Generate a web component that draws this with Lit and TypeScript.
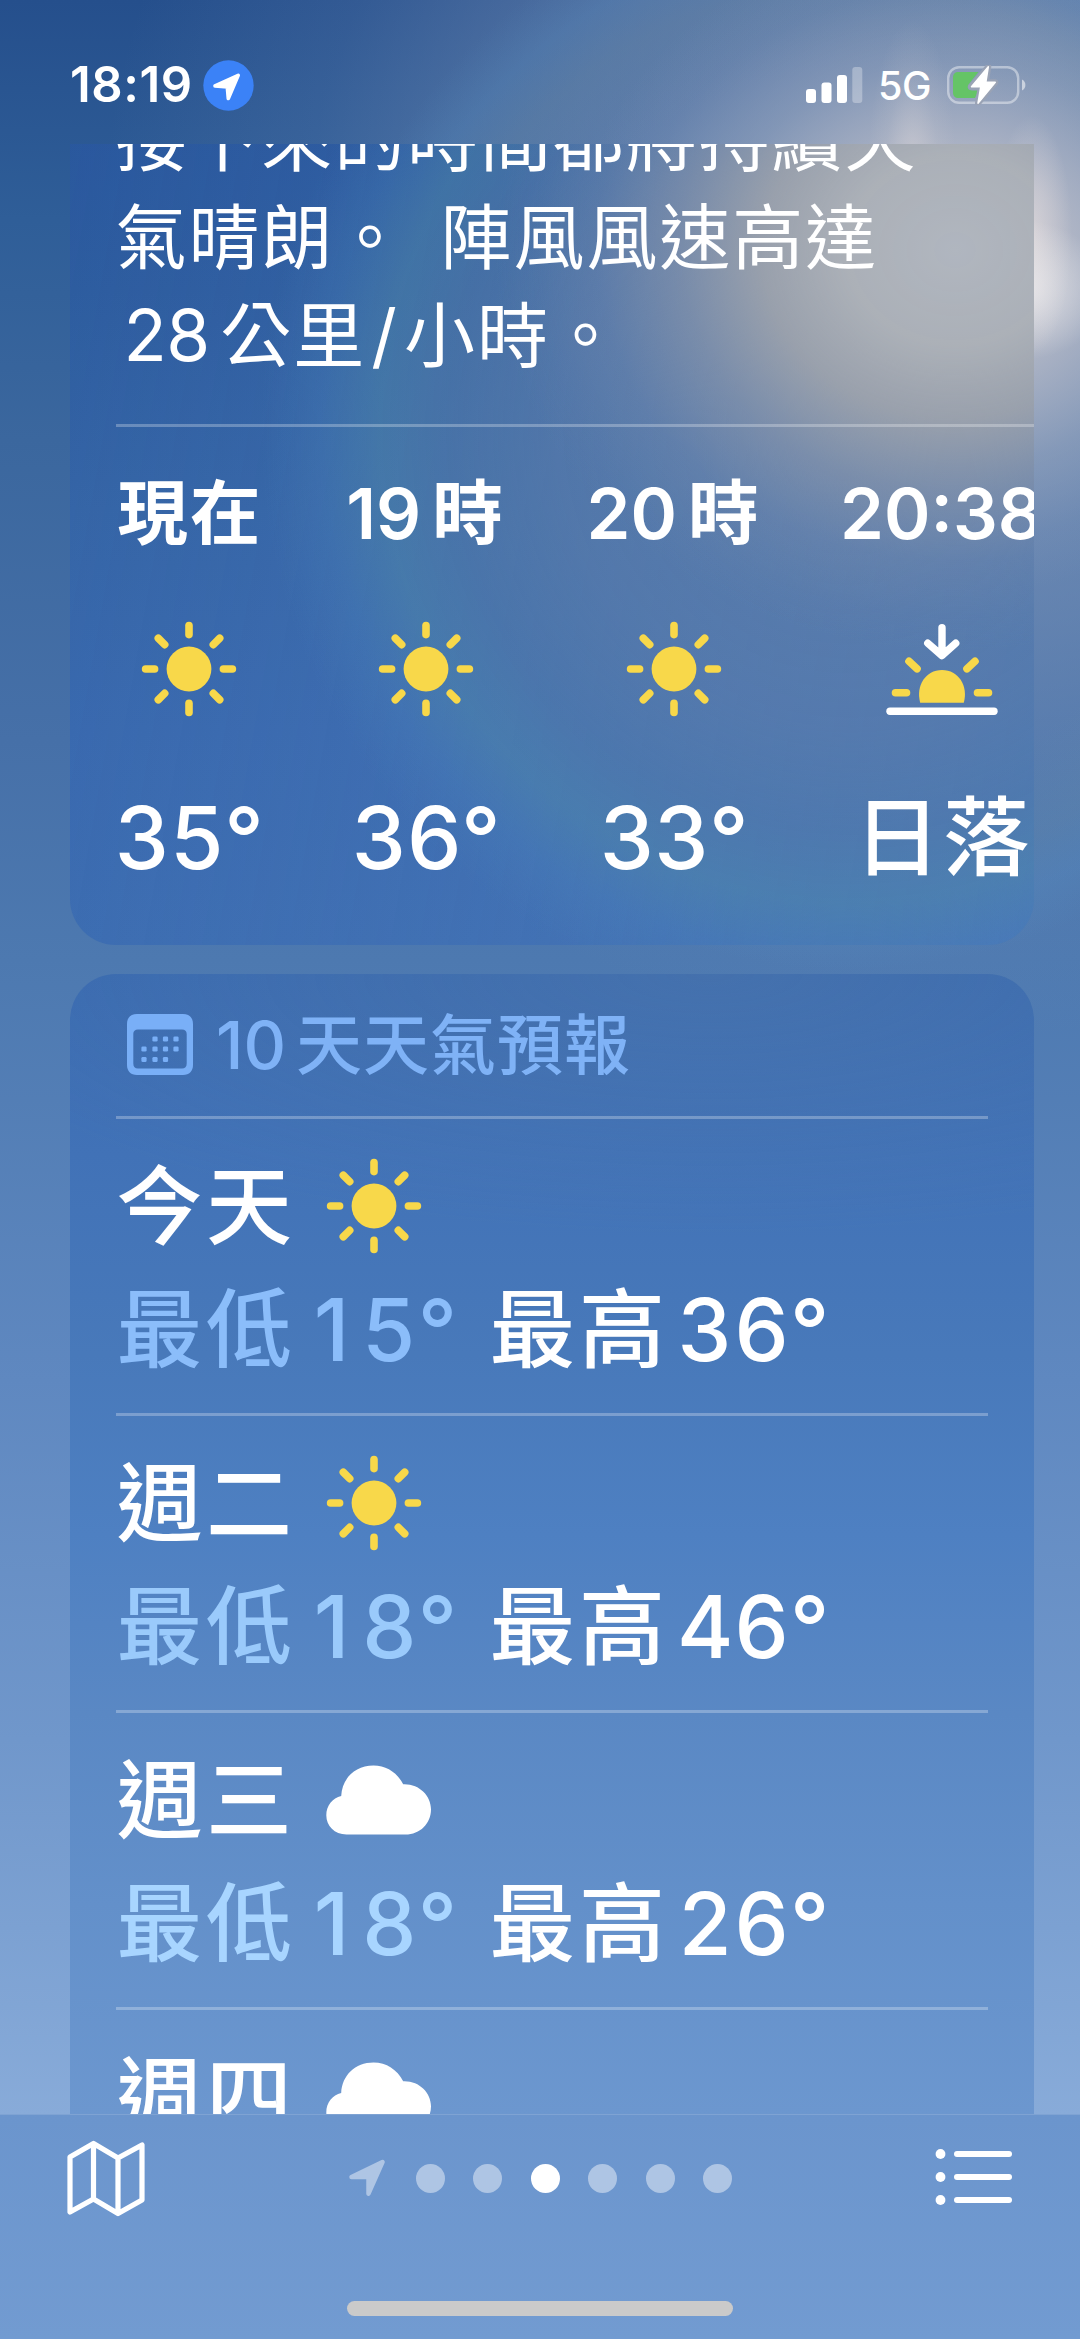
import { LitElement, html, svg, css, nothing } from "lit";
import { customElement, property } from "lit/decorators.js";

type Sky = "sun" | "cloud" | "sunset";

interface Hour {
  digits: string;
  word: string;
  sky: Sky;
  value: string;
  kind: string;
}

interface Day {
  name: string;
  sky: Sky;
  low: string;
  high: string;
  tone: string;
}

const HOURS: Hour[] = [
  { digits: "", word: "現在", sky: "sun", value: "35°", kind: "now" },
  { digits: "19", word: "時", sky: "sun", value: "36°", kind: "h19" },
  { digits: "20", word: "時", sky: "sun", value: "33°", kind: "h20" },
  { digits: "20:38", word: "", sky: "sunset", value: "日落", kind: "set" },
];

const DAYS: Day[] = [
  { name: "今天", sky: "sun", low: "15°", high: "36°", tone: "t1" },
  { name: "週二", sky: "sun", low: "18°", high: "46°", tone: "t2" },
  { name: "週三", sky: "cloud", low: "18°", high: "26°", tone: "t3" },
];

@customElement("weather-icon")
export class WeatherIcon extends LitElement {
  @property() sky: Sky = "sun";

  static styles = css`
    :host {
      display: block;
      line-height: 0;
    }
    svg {
      display: block;
      overflow: visible;
    }
    .gold {
      fill: #f8d84a;
    }
    .ray {
      stroke: #f8d84a;
      stroke-width: 7.6;
      stroke-linecap: round;
    }
    .white {
      fill: #fff;
    }
    .line {
      stroke: #fff;
      stroke-width: 7.4;
      stroke-linecap: round;
      stroke-linejoin: round;
      fill: none;
    }
  `;

  render() {
    if (this.sky === "cloud") {
      return html`<svg width="106" height="96" viewBox="0 0 106 96">
        <path
          class="white"
          d="M20.5 82.5 C8.5 82.5 0.3 74 0.3 63.3 C0.3 53.5 6.5 46 15.2 44 C16 26.500 29 13.500 47.500 13.500 C60.500 13.500 71 20.500 77.200 32.200 C93 31.500 105 43.500 105 57.200 C105 71.500 94 82.500 79.500 82.500 Z"
        />
      </svg>`;
    }
    if (this.sky === "sunset") {
      return html`<svg width="112" height="96" viewBox="0 0 112 96">
        <path class="line" d="M56 6.700 V33.500 M41.800 22.200 L56 34.600 L69.700 22.200" />
        <path class="gold" d="M34.200 81.700 C29.500 65 39.500 49 56 49 C72.500 49 82.500 65 77.800 81.700 Z" />
        <path class="ray" d="M9.500 71.700 H20.500 M91.500 71.700 H102.500 M23 40.300 L31 47.800 M89 40.300 L81 47.800" />
        <path class="line" d="M4 90.300 H108" />
      </svg>`;
    }
    return html`<svg width="96" height="96" viewBox="0 0 96 96">
      <circle class="gold" cx="48" cy="48" r="22.4" />
      ${[0, 45, 90, 135, 180, 225, 270, 315].map(
        (angle) =>
          svg`<line class="ray" x1="48" y1="4.600" x2="48" y2="13.600" transform="rotate(${angle} 48 48)" />`,
      )}
    </svg>`;
  }
}

@customElement("app-root")
export class AppRoot extends LitElement {
  static styles = css`
    :host {
      display: block;
      color: #fff;
      font-family: Inter, "Noto Sans CJK TC", sans-serif;
    }
    .screen {
      display: flex;
      flex-direction: column;
      width: 1080px;
      height: 2339px;
      overflow: hidden;
      background:
        radial-gradient(44px 150px at 912px 170px, rgba(238, 228, 224, 0.42), rgba(220, 215, 215, 0.12) 60%, transparent),
        radial-gradient(90px 70px at 1020px 290px, rgba(255, 252, 250, 0.6), transparent),
        radial-gradient(40px 120px at 1032px 235px, rgba(245, 234, 230, 0.5), transparent),
        radial-gradient(380px 330px at 950px 265px, rgba(206, 202, 207, 0.9) 0, rgba(194, 194, 203, 0.76) 32%, rgba(165, 175, 194, 0.42) 62%, rgba(150, 165, 192, 0.12) 84%, rgba(150, 165, 192, 0) 100%),
        radial-gradient(540px 540px at 850px 430px, transparent 66%, rgba(110, 152, 165, 0.14) 82%, rgba(90, 155, 205, 0.16) 91%, transparent),
        radial-gradient(860px 800px at 960px 240px, rgba(155, 168, 195, 0.74), rgba(138, 157, 190, 0.46) 48%, rgba(125, 150, 190, 0.16) 76%, transparent),
        linear-gradient(180deg, #254f8c 0, #2f5e98 220px, #3b679e 440px, #4670a8 740px, #4d79b0 960px, #5f88c0 1380px, #7097cb 1740px, #88abd9 2115px);
    }
    .status {
      flex: none;
      box-sizing: border-box;
      height: 144px;
      padding: 25px 54px 0 70px;
      display: flex;
      justify-content: space-between;
      line-height: 1.2;
    }
    .group {
      height: 120px;
      display: flex;
      align-items: center;
    }
    .clock {
      font-size: 49px;
      font-weight: 600;
      letter-spacing: 0.600px;
      width: 132.500px;
    }
    .locate {
      width: 51px;
      height: 51px;
      display: block;
    }
    .net {
      font-size: 39.500px;
      font-weight: 500;
      letter-spacing: -0.300px;
      margin: 4px 16px 0 15px;
      width: 53px;
    }
    main {
      flex: none;
      height: 1970px;
      overflow: hidden;
      display: flex;
      flex-direction: column;
      gap: 29px;
      padding: 0 46px 0 69.500px;
    }
    .card {
      flex: none;
      box-sizing: border-box;
      overflow: hidden;
      border-radius: 46px;
      padding-left: 46px;
    }
    .hourly {
      margin-top: -54.500px;
      height: 855px;
      background:
        radial-gradient(460px 400px at 885px 160px, #b0b6bf 0, rgba(174, 178, 184, 0.97) 24%, rgba(166, 168, 173, 0.84) 42%, rgba(150, 157, 172, 0.56) 60%, rgba(130, 146, 175, 0.26) 78%, rgba(120, 142, 175, 0.08) 92%, transparent),
        radial-gradient(590px 590px at 781px 340px, rgba(108, 134, 170, 0.62) 0, rgba(100, 130, 170, 0.54) 50%, rgba(90, 128, 168, 0.46) 68%, rgba(85, 142, 170, 0.42) 80%, rgba(80, 138, 188, 0.22) 90%, transparent),
        linear-gradient(100deg, transparent, rgba(100, 140, 195, 0.3)),
        linear-gradient(180deg, #28569d 0, #2d5c9f 200px, #3464a6 420px, #3868ae 640px, #3b6cb1 855px);
    }
    .daily {
      padding-right: 46px;
      height: 1400px;
      background:
        radial-gradient(800px 260px at 640px 0, rgba(90, 125, 165, 0.32), transparent),
        linear-gradient(180deg, #3a6bb1 0, #4172b7 180px, #4879ba 380px, #4e80c2 560px, #5a88c4 740px, #6390ca 930px, #6c97cf 1141px);
    }
    .summary {
      height: 334px;
      box-sizing: border-box;
      font-size: 71px;
      line-height: 98px;
      font-weight: 400;
      letter-spacing: 1.900px;
      white-space: nowrap;
    }
    .line {
      height: 98px;
    }
    .gap {
      display: inline-block;
      width: 33.500px;
    }
    .wind {
      margin-left: 8px;
      margin-right: 10.500px;
      letter-spacing: -0.5px;
    }
    .slash {
      display: inline-block;
      width: 38px;
      text-align: center;
    }
    .rule {
      height: 3px;
      background: rgba(255, 255, 255, 0.27);
    }
    .hours {
      display: grid;
      grid-template-columns: 146px 160px 168px 200px;
      column-gap: 84px;
      padding-top: 45px;
    }
    .hour {
      display: flex;
      flex-direction: column;
      align-items: center;
      white-space: nowrap;
    }
    .label {
      height: 84px;
      line-height: 84px;
      font-size: 70.500px;
      font-weight: 600;
      margin-bottom: 65px;
      display: flex;
      gap: 11px;
    }
    .word {
      letter-spacing: 2px;
    }
    .now .word {
      margin-left: 3px;
    }
    .value {
      margin-top: 71px;
      height: 100px;
      line-height: 100px;
      font-size: 86.500px;
      font-weight: 500;
      letter-spacing: -1.300px;
      font-feature-settings: "tnum";
    }
    .set .value {
      letter-spacing: 2.500px;
      margin-left: 3px;
    }
    .head {
      height: 142.500px;
      display: flex;
      align-items: center;
      color: #7fb2f6;
      font-size: 66px;
      line-height: 80px;
      font-weight: 500;
      padding-left: 11.500px;
      white-space: nowrap;
    }
    .head .num {
      margin-left: 23px;
      width: 72px;
    }
    .head .title {
      margin-left: 8px;
      letter-spacing: 1px;
    }
    .day {
      height: 294px;
      padding-top: 26.500px;
      box-sizing: border-box;
      font-size: 86px;
      line-height: 123px;
      font-weight: 500;
      white-space: nowrap;
      font-feature-settings: "tnum";
    }
    .top,
    .temps {
      height: 123px;
      display: flex;
      align-items: center;
      padding-left: 1px;
    }
    .cjk {
      width: 178px;
      letter-spacing: 3.500px;
    }
    .top weather-icon {
      margin-left: 31px;
      margin-top: -2px;
    }
    .deg {
      letter-spacing: 0.500px;
      margin-left: 10px;
      width: 185px;
    }
    .lead {
      display: inline-block;
      box-sizing: border-box;
      width: 57px;
      padding-right: 12px;
      text-align: right;
      letter-spacing: 0;
      font-feature-settings: "tnum" 0;
    }
    .low,
    .high {
      display: flex;
    }
    .t1 .low {
      color: #8bbdfa;
    }
    .t2 .low {
      color: #9acafb;
    }
    .t3 .low {
      color: #a8d5ff;
    }
    footer {
      flex: none;
      box-sizing: border-box;
      height: 225px;
      border-top: 1.500px solid #7fa3d3;
      background: linear-gradient(180deg, #6b95cd, #729bd1);
      display: flex;
      flex-direction: column;
      align-items: center;
    }
    .bar {
      align-self: stretch;
      height: 126px;
      display: flex;
      align-items: center;
      justify-content: space-between;
      padding: 0 65px;
    }
    .pages {
      display: flex;
      align-items: center;
      gap: 28.500px;
      color: #aec5e4;
      margin-left: 1px;
    }
    .arrow {
      margin-right: 2.500px;
    }
    .dot {
      width: 29px;
      height: 29px;
      border-radius: 50%;
      background: currentColor;
    }
    .on {
      color: #fff;
    }
    .home {
      margin-top: 60px;
      width: 386px;
      height: 15px;
      border-radius: 8px;
      background: #cacaca;
    }
    svg {
      display: block;
    }
  `;

  private renderStatus() {
    return html`<header class="status">
      <div class="group">
        <span class="clock">18:19</span>
        <svg class="locate" viewBox="0 0 51 51">
          <circle cx="25.500" cy="25.500" r="25.200" fill="#3b82f7" />
          <path
            d="M12 26 L35.200 15.300 L25.300 38.500 L24.300 27 Z"
            fill="#fff"
            stroke="#fff"
            stroke-width="3.600"
            stroke-linejoin="round"
          />
        </svg>
      </div>
      <div class="group">
        <svg width="57" height="36" viewBox="0 0 57 36" fill="#fff">
          <rect x="0" y="22" width="10" height="14" rx="3" />
          <rect x="15.500" y="15.500" width="10" height="20.500" rx="3" />
          <rect x="31" y="8" width="10" height="28" rx="3" />
          <rect x="46.300" y="0" width="10" height="36" rx="3" fill-opacity=".3" />
        </svg>
        <span class="net">5G</span>
        <svg width="79" height="40" viewBox="0 0 79 40">
          <rect x="1.200" y="2.200" width="70" height="35.600" rx="11" fill="none" stroke="#fff" stroke-opacity=".42" stroke-width="2.400" />
          <path d="M75 14.500 C79.500 16.500 79.500 23.500 75 25.500 Z" fill="#fff" fill-opacity=".55" />
          <path
            d="M11.500 7 H31.500 L21.500 19.500 C19.500 22.500 21.500 25.500 25 25.500 H31.500 L28 33 H11.500 C8 33 6 31 6 27.500 V12.500 C6 9 8 7 11.500 7 Z"
            fill="#65c466"
          />
          <path
            d="M41.300 1.800 L24.500 21.700 H33.800 L31 38.200 L48.300 17.300 H38.800 Z"
            fill="#fff"
            stroke="#9aa3b5"
            stroke-width="6"
            paint-order="stroke"
            stroke-linejoin="round"
          />
          <path d="M41.300 1.800 L24.500 21.700 H33.800 L31 38.200 L48.300 17.300 H38.800 Z" fill="#fff" stroke="#fff" stroke-width="1.500" stroke-linejoin="round" />
        </svg>
      </div>
    </header>`;
  }

  private renderHour(hour: Hour) {
    return html`<div class="hour ${hour.kind}">
      <div class="label">
        ${hour.digits ? html`<span>${hour.digits}</span>` : nothing}
        ${hour.word ? html`<span class="word">${hour.word}</span>` : nothing}
      </div>
      <weather-icon .sky=${hour.sky}></weather-icon>
      <div class="value">${hour.value}</div>
    </div>`;
  }

  private renderDayTop(name: string, sky: Sky) {
    return html`<div class="top">
      <span class="cjk">${name}</span>
      <weather-icon .sky=${sky}></weather-icon>
    </div>`;
  }

  private renderDay(day: Day) {
    return html`<div class="rule"></div>
      <div class="day ${day.tone}">
        ${this.renderDayTop(day.name, day.sky)}
        <div class="temps">
          <div class="low">
            <span class="cjk">最低</span
            ><span class="deg"><span class="lead">${day.low[0]}</span>${day.low.slice(1)}</span>
          </div>
          <div class="high"><span class="cjk">最高</span><span class="deg">${day.high}</span></div>
        </div>
      </div>`;
  }

  render() {
    return html`<div class="screen">
      ${this.renderStatus()}
      <main>
        <section class="card hourly">
          <div class="summary">
            <div class="line">接下來的時間都將持續天</div>
            <div class="line">氣晴朗。<span class="gap"></span>陣風風速高達</div>
            <div class="line"><span class="wind">28</span>公里<span class="slash">/</span>小時。</div>
          </div>
          <div class="rule"></div>
          <div class="hours">${HOURS.map((hour) => this.renderHour(hour))}</div>
        </section>
        <section class="card daily">
          <div class="head">
            <svg width="66" height="61" viewBox="0 0 66 61" fill="#79aff7">
              <path
                fill-rule="evenodd"
                d="M10 0 H56 C62.500 0 66 4 66 10 V51 C66 57 62.500 61 56 61 H10 C3.500 61 0 57 0 51 V10 C0 4 3.500 0 10 0 Z M11 15.500 C8 15.500 6.300 17 6.300 20 V49.500 C6.300 53 8 54.600 11 54.600 H55 C58 54.600 59.700 53 59.700 49.500 V20 C59.700 17 58 15.500 55 15.500 Z"
              />
              ${[
                [28, 25], [38.500, 25], [49, 25],
                [17, 35], [28, 35], [38.500, 35], [49, 35],
                [17, 45.500], [28, 45.500], [38.500, 45.500],
              ].map(([x, y]) => svg`<rect x=${x - 2.6} y=${y - 2.6} width="5.200" height="5.200" rx="1.300" />`)}
            </svg>
            <span class="num">10</span>
            <span class="title">天天氣預報</span>
          </div>
          ${DAYS.map((day) => this.renderDay(day))}
          <div class="rule"></div>
          <div class="day">${this.renderDayTop("週四", "cloud")}</div>
        </section>
      </main>
      <footer>
        <div class="bar">
          <svg width="82" height="78" viewBox="0 0 82 78" fill="none" stroke="#fff" stroke-width="5.200" stroke-linejoin="round">
            <path d="M5 18 L28.500 4.500 L53 19 L77 6 V61 L53 74.500 L28.500 60 L5 73 Z M28.500 4.500 V60 M53 19 V74.500" />
          </svg>
          <div class="pages">
            <svg class="arrow" width="36" height="38" viewBox="0 0 36 38" fill="currentColor">
              <path
                d="M2.500 18 L33.500 3 L19.500 34.700 V18 Z"
                stroke="currentColor"
                stroke-width="4.500"
                stroke-linejoin="round"
              />
            </svg>
            ${[0, 1, 2, 3, 4, 5].map((i) => html`<span class="dot ${i === 2 ? "on" : ""}"></span>`)}
          </div>
          <svg width="82" height="62" viewBox="0 0 82 62" fill="#fff">
            ${[7, 30, 53].map(
              (y) => svg`<circle cx="7.500" cy=${y} r="4.900" /><rect x="21" y=${y - 3} width="58" height="6" rx="3" />`,
            )}
          </svg>
        </div>
        <div class="home"></div>
      </footer>
    </div>`;
  }
}
